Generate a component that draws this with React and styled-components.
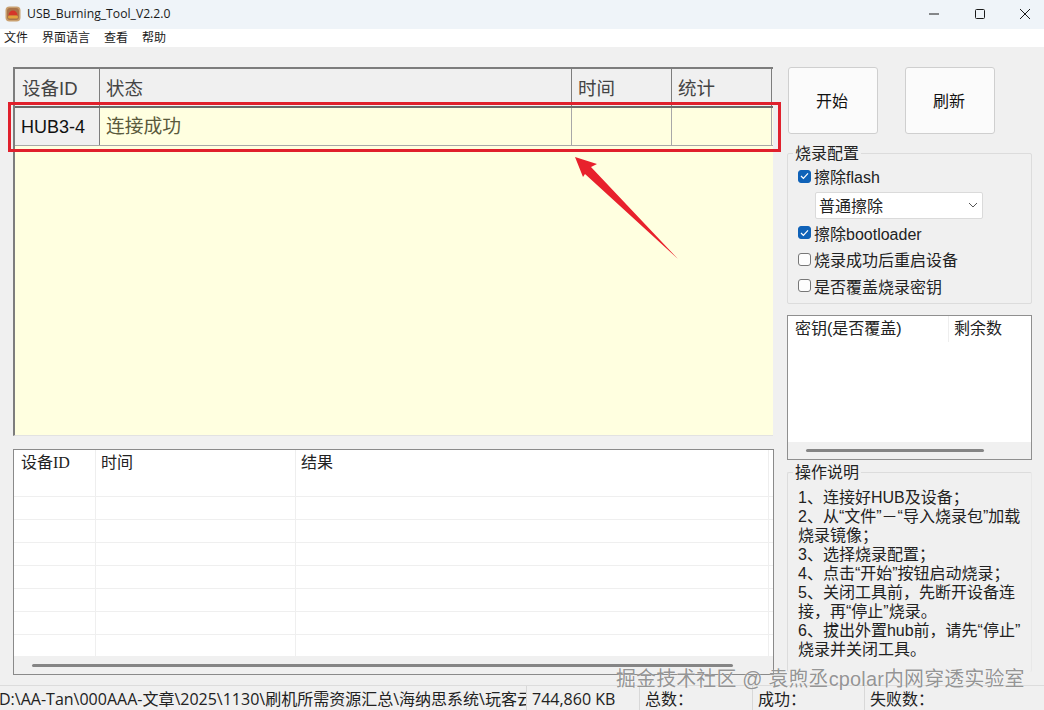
import React from "react";
import styled, { createGlobalStyle } from "styled-components";

const CJK = `"Liberation Sans", "Noto Sans CJK SC", sans-serif`;
const CJK_SERIF = `"Liberation Serif", "Noto Sans CJK SC", serif`;

const deviceColumns = [
  { label: "设备ID", width: 85 },
  { label: "状态", width: 472 },
  { label: "时间", width: 100 },
  { label: "统计", width: 100 },
];

const historyColumns = [
  { label: "设备ID", width: 82 },
  { label: "时间", width: 200 },
  { label: "结果", width: 473 },
];

const helpLines = [
  "1、连接好HUB及设备；",
  "2、从“文件”－“导入烧录包”加载",
  "烧录镜像；",
  "3、选择烧录配置；",
  "4、点击“开始”按钮启动烧录；",
  "5、关闭工具前，先断开设备连",
  "接，再“停止”烧录。",
  "6、拔出外置hub前，请先“停止”",
  "烧录并关闭工具。",
];

export default function App() {
  return (
    <Window>
      <GlobalStyle />
      <TitleBar>
        <AppIcon />
        <AppName>USB_Burning_Tool_V2.2.0</AppName>
        <WindowControls>
          <ControlButton>
            <svg width="12" height="12" viewBox="0 0 12 12">
              <path d="M1 6h10" stroke="#1a1a1a" strokeWidth="1" />
            </svg>
          </ControlButton>
          <ControlButton>
            <svg width="12" height="12" viewBox="0 0 12 12">
              <rect x="1.5" y="1.5" width="9" height="9" rx="1" fill="none" stroke="#1a1a1a" />
            </svg>
          </ControlButton>
          <ControlButton>
            <svg width="12" height="12" viewBox="0 0 12 12">
              <path d="M1 1l10 10M11 1L1 11" stroke="#1a1a1a" strokeWidth="1" />
            </svg>
          </ControlButton>
        </WindowControls>
      </TitleBar>

      <MenuBar>
        <MenuItem>文件</MenuItem>
        <MenuItem>界面语言</MenuItem>
        <MenuItem>查看</MenuItem>
        <MenuItem>帮助</MenuItem>
      </MenuBar>

      <Workspace>
        <LeftColumn>
          <DeviceTable>
            <DeviceHeader>
              {deviceColumns.map((col) => (
                <DeviceHeadCell key={col.label} $width={col.width}>
                  {col.label}
                </DeviceHeadCell>
              ))}
            </DeviceHeader>
            <DeviceRow>
              <HubCell>HUB3-4</HubCell>
              <StatusCell>连接成功</StatusCell>
              <EmptyCell $width={100} />
              <EmptyCell $width={100} />
            </DeviceRow>
          </DeviceTable>

          <HistoryTable>
            <HistoryHeader>
              {historyColumns.map((col, i) => (
                <HistoryHeadCell key={col.label} $width={col.width} $first={i === 0}>
                  {col.label}
                </HistoryHeadCell>
              ))}
            </HistoryHeader>
            <HistoryBody>
              {[0, 1, 2, 3, 4, 5, 6].map((row) => (
                <HistoryRow key={row}>
                  {historyColumns.map((col) => (
                    <HistoryCell key={col.label} $width={col.width} />
                  ))}
                </HistoryRow>
              ))}
            </HistoryBody>
            <ScrollTrack $pad={18} $height={18}>
              <ScrollThumb $width={701} />
            </ScrollTrack>
          </HistoryTable>
        </LeftColumn>

        <RightColumn>
          <ButtonRow>
            <ActionButton>开始</ActionButton>
            <ActionButton>刷新</ActionButton>
          </ButtonRow>

          <ConfigGroup>
            <GroupLegend>烧录配置</GroupLegend>
            <CheckRow>
              <CheckBox $checked>
                <CheckMark />
              </CheckBox>
              擦除flash
            </CheckRow>
            <SelectBox>
              普通擦除
              <svg width="10" height="6" viewBox="0 0 10 6">
                <path d="M1 1l4 4 4-4" fill="none" stroke="#555" />
              </svg>
            </SelectBox>
            <CheckRow>
              <CheckBox $checked>
                <CheckMark />
              </CheckBox>
              擦除bootloader
            </CheckRow>
            <CheckRow>
              <CheckBox />
              烧录成功后重启设备
            </CheckRow>
            <CheckRow>
              <CheckBox />
              是否覆盖烧录密钥
            </CheckRow>
          </ConfigGroup>

          <KeyTable>
            <KeyHeader>
              <KeyHeadCell $width={161} $pad={7}>密钥(是否覆盖)</KeyHeadCell>
              <KeyHeadCell $width={80} $pad={5}>剩余数</KeyHeadCell>
            </KeyHeader>
            <KeyBody />
            <ScrollTrack $pad={18} $height={17}>
              <ScrollThumb $width={178} />
            </ScrollTrack>
          </KeyTable>

          <HelpGroup>
            <GroupLegend>操作说明</GroupLegend>
            {helpLines.map((line) => (
              <HelpLine key={line}>{line}</HelpLine>
            ))}
          </HelpGroup>
        </RightColumn>
      </Workspace>

      <StatusBar>
        <PathCell>D:\AA-Tan\000AAA-文章\2025\1130\刷机所需资源汇总\海纳思系统\玩客云</PathCell>
        <StatusItem $width={113}>744,860 KB</StatusItem>
        <StatusItem $width={113}>总数：</StatusItem>
        <StatusItem $width={112}>成功：</StatusItem>
        <StatusItem $width={179}>失败数：</StatusItem>
      </StatusBar>

      {/* screenshot annotations drawn on top of the window */}
      <Highlight />
      <Arrow width="120" height="120" viewBox="0 0 120 120">
        <path d="M1 5L23 12L17 15L104 107L11 22L9 25Z" fill="#e8212c" />
      </Arrow>
      <Watermark>掘金技术社区 @ 袁煦丞cpolar内网穿透实验室</Watermark>
    </Window>
  );
}

const AppIcon = () => (
  <svg width="16" height="16" viewBox="0 0 16 16">
    <rect x="0.5" y="0.5" width="15" height="15" rx="4" fill="#c9a070" />
    <rect x="2" y="2" width="12" height="12" rx="3" fill="#a9744a" />
    <path d="M3.5 9.5a4.5 5 0 0 1 9 0z" fill="#d5352a" />
    <rect x="3" y="9.5" width="10" height="3" rx="1.5" fill="#e2a23c" />
  </svg>
);

const CheckMark = () => (
  <svg width="9" height="8" viewBox="0 0 9 8">
    <path d="M1 4l2.4 2.4L8 1.4" fill="none" stroke="#fff" strokeWidth="1.2" />
  </svg>
);

const GlobalStyle = createGlobalStyle`
  html, body {
    margin: 0;
    padding: 0;
    background: #f0f0f0;
  }
  * {
    box-sizing: border-box;
  }
`;

const Window = styled.div`
  position: relative;
  width: 1044px;
  height: 710px;
  overflow: hidden;
  display: flex;
  flex-direction: column;
  background: #f0f0f0;
  font-family: ${CJK};
  color: #111;
`;

const TitleBar = styled.div`
  height: 29px;
  flex: none;
  display: flex;
  align-items: center;
  padding: 0 0 2px 5px;
  background: #eff4f9;
`;

const AppName = styled.span`
  margin-left: 6px;
  font-family: "Open Sans", "Liberation Sans", sans-serif;
  font-size: 12.2px;
  color: #1a1a1a;
`;

const WindowControls = styled.div`
  margin-left: auto;
  margin-right: -4px;
  display: flex;
`;

const ControlButton = styled.div`
  width: 45.5px;
  height: 27px;
  display: flex;
  align-items: center;
  justify-content: center;
`;

const MenuBar = styled.div`
  height: 18px;
  flex: none;
  display: flex;
  align-items: center;
  gap: 14px;
  padding: 1px 0 0 4px;
  background: #fff;
`;

const MenuItem = styled.span`
  font-size: 12px;
  line-height: 17px;
  color: #1a1a1a;
`;

const Workspace = styled.div`
  flex: 1;
  min-height: 0;
  display: flex;
  gap: 13px;
  padding: 20px 0 0 13px;
`;

const LeftColumn = styled.div`
  width: 761px;
  display: flex;
  flex-direction: column;
  gap: 13px;
`;

const DeviceTable = styled.div`
  height: 369px;
  flex: none;
  background: #ffffe0;
  border-top: 2px solid #7d7d7d;
  border-left: 2px solid #7d7d7d;
  border-bottom: 1px solid #e2e2e2;
  margin-right: 1px;
`;

const DeviceHeader = styled.div`
  display: flex;
  height: 39px;
  background: #f0f0f0;
  border-bottom: 2px solid #6a6a6a;
`;

const DeviceHeadCell = styled.div`
  width: ${(p) => p.$width}px;
  padding-left: 6px;
  padding-top: 8px;
  font-size: 18.5px;
  line-height: 24px;
  color: #444;
  border-right: 1px solid #7d7d7d;
  &:first-child {
    padding-left: 7px;
  }
`;

const DeviceRow = styled.div`
  display: flex;
  height: 38px;
  border-bottom: 1px solid #a8a8a8;
`;

const HubCell = styled.div`
  width: 85px;
  padding-left: 6px;
  background: #f0f0f0;
  border-right: 1px solid #7d7d7d;
  font-size: 18px;
  line-height: 39px;
  color: #111;
`;

const StatusCell = styled.div`
  width: 472px;
  padding-left: 6px;
  border-right: 1px solid #a8a8a8;
  font-size: 18.75px;
  line-height: 38px;
  color: #5a5a3c;
`;

const EmptyCell = styled.div`
  width: ${(p) => p.$width}px;
  border-right: 1px solid #a8a8a8;
`;

const HistoryTable = styled.div`
  height: 226px;
  flex: none;
  display: flex;
  flex-direction: column;
  background: #fff;
  border: 1px solid #8a8a8a;
`;

const HistoryHeader = styled.div`
  display: flex;
  height: 46px;
  flex: none;
`;

const HistoryHeadCell = styled.div`
  width: ${(p) => p.$width}px;
  padding-left: ${(p) => (p.$first ? 7 : 5)}px;
  font-family: ${CJK_SERIF};
  font-size: 16px;
  line-height: 25px;
  color: #222;
  border-right: 1px solid #eeeeee;
`;

const HistoryBody = styled.div`
  flex: 1;
  min-height: 0;
  overflow: hidden;
`;

const HistoryRow = styled.div`
  display: flex;
  height: 23px;
  border-top: 1px solid #efefef;
`;

const HistoryCell = styled.div`
  width: ${(p) => p.$width}px;
  border-right: 1px solid #efefef;
`;

const ScrollTrack = styled.div`
  height: ${(p) => p.$height}px;
  flex: none;
  display: flex;
  align-items: center;
  padding-left: ${(p) => p.$pad}px;
  background: #f0f0f0;
`;

const ScrollThumb = styled.div`
  width: ${(p) => p.$width}px;
  height: 3px;
  border-radius: 2px;
  background: #858585;
`;

const RightColumn = styled.div`
  width: 245px;
  display: flex;
  flex-direction: column;
`;

const ButtonRow = styled.div`
  display: flex;
  gap: 27px;
  padding-left: 1px;
`;

const ActionButton = styled.div`
  width: 90px;
  height: 67px;
  padding: 0 2px 2px 0;
  display: flex;
  align-items: center;
  justify-content: center;
  background: #fbfbfb;
  border: 1px solid #cfcfcf;
  border-radius: 3px;
  font-size: 16px;
  color: #111;
`;

const ConfigGroup = styled.fieldset`
  margin: 9px 0 0;
  padding: 0 0 0 10px;
  height: 161px;
  flex: none;
  border: 1px solid #dcdcdc;
  border-radius: 2px;
`;

const HelpGroup = styled(ConfigGroup)`
  margin-top: 2px;
  padding-top: 6px;
  height: 210px;
  border-bottom: none;
  border-right-color: #e8e8e8;
`;

const GroupLegend = styled.legend`
  padding: 2px 2px 0;
  margin-left: -5px;
  font-size: 16px;
  line-height: 18px;
  color: #222;
`;

const CheckRow = styled.label`
  display: flex;
  align-items: center;
  gap: 3px;
  height: 26.5px;
  font-size: 16px;
  color: #222;
`;

const CheckBox = styled.span`
  width: 13px;
  height: 13px;
  flex: none;
  display: flex;
  align-items: center;
  justify-content: center;
  border-radius: 3px;
  background: ${(p) => (p.$checked ? "#0f62b8" : "#fdfdfd")};
  border: 1px solid ${(p) => (p.$checked ? "#0f62b8" : "#777")};
`;

const SelectBox = styled.div`
  width: 168px;
  height: 27px;
  margin: 2.5px 0 0.5px 17px;
  padding: 0 4px 1px 3px;
  display: flex;
  align-items: center;
  justify-content: space-between;
  background: #fff;
  border: 1px solid #dadada;
  border-radius: 2px;
  font-size: 16px;
  color: #222;
`;

const KeyTable = styled.div`
  height: 145px;
  flex: none;
  margin-top: 11px;
  display: flex;
  flex-direction: column;
  background: #fff;
  border: 1px solid #8f8f8f;
`;

const KeyHeader = styled.div`
  display: flex;
  height: 26px;
  flex: none;
`;

const KeyHeadCell = styled.div`
  width: ${(p) => p.$width}px;
  padding-left: ${(p) => p.$pad}px;
  font-size: 16px;
  line-height: 26px;
  color: #222;
  &:first-child {
    border-right: 1px solid #eeeeee;
  }
`;

const KeyBody = styled.div`
  flex: 1;
`;

const HelpLine = styled.div`
  height: 19px;
  font-size: 16px;
  line-height: 19px;
  white-space: nowrap;
  color: #222;
`;

const StatusBar = styled.div`
  height: 25px;
  flex: none;
  display: flex;
  border-top: 1px solid #dcdcdc;
  font-family: "Open Sans", "Noto Sans CJK SC", sans-serif;
  font-size: 16px;
  line-height: 21px;
  color: #222;
`;

const PathCell = styled.div`
  width: 528px;
  flex: none;
  overflow: hidden;
  white-space: nowrap;
  margin-left: -1px;
  padding-top: 3px;
  border-right: 1px solid #d8d8d8;
`;

const StatusItem = styled.div`
  width: ${(p) => p.$width}px;
  flex: none;
  padding: 3px 0 0 5px;
  border-right: 1px solid #d8d8d8;
  &:last-child {
    border-right: none;
  }
`;

const Highlight = styled.div`
  position: absolute;
  left: 8px;
  top: 102px;
  width: 773px;
  height: 50px;
  border: 3px solid #e0202c;
  pointer-events: none;
`;

const Arrow = styled.svg`
  position: absolute;
  left: 574px;
  top: 152px;
`;

const Watermark = styled.div`
  position: absolute;
  left: 616px;
  top: 669px;
  font-size: 19.9px;
  line-height: 20px;
  letter-spacing: 0.2px;
  white-space: nowrap;
  color: rgba(120, 120, 120, 0.8);
  text-shadow: 0 0 1px #fff;
`;
